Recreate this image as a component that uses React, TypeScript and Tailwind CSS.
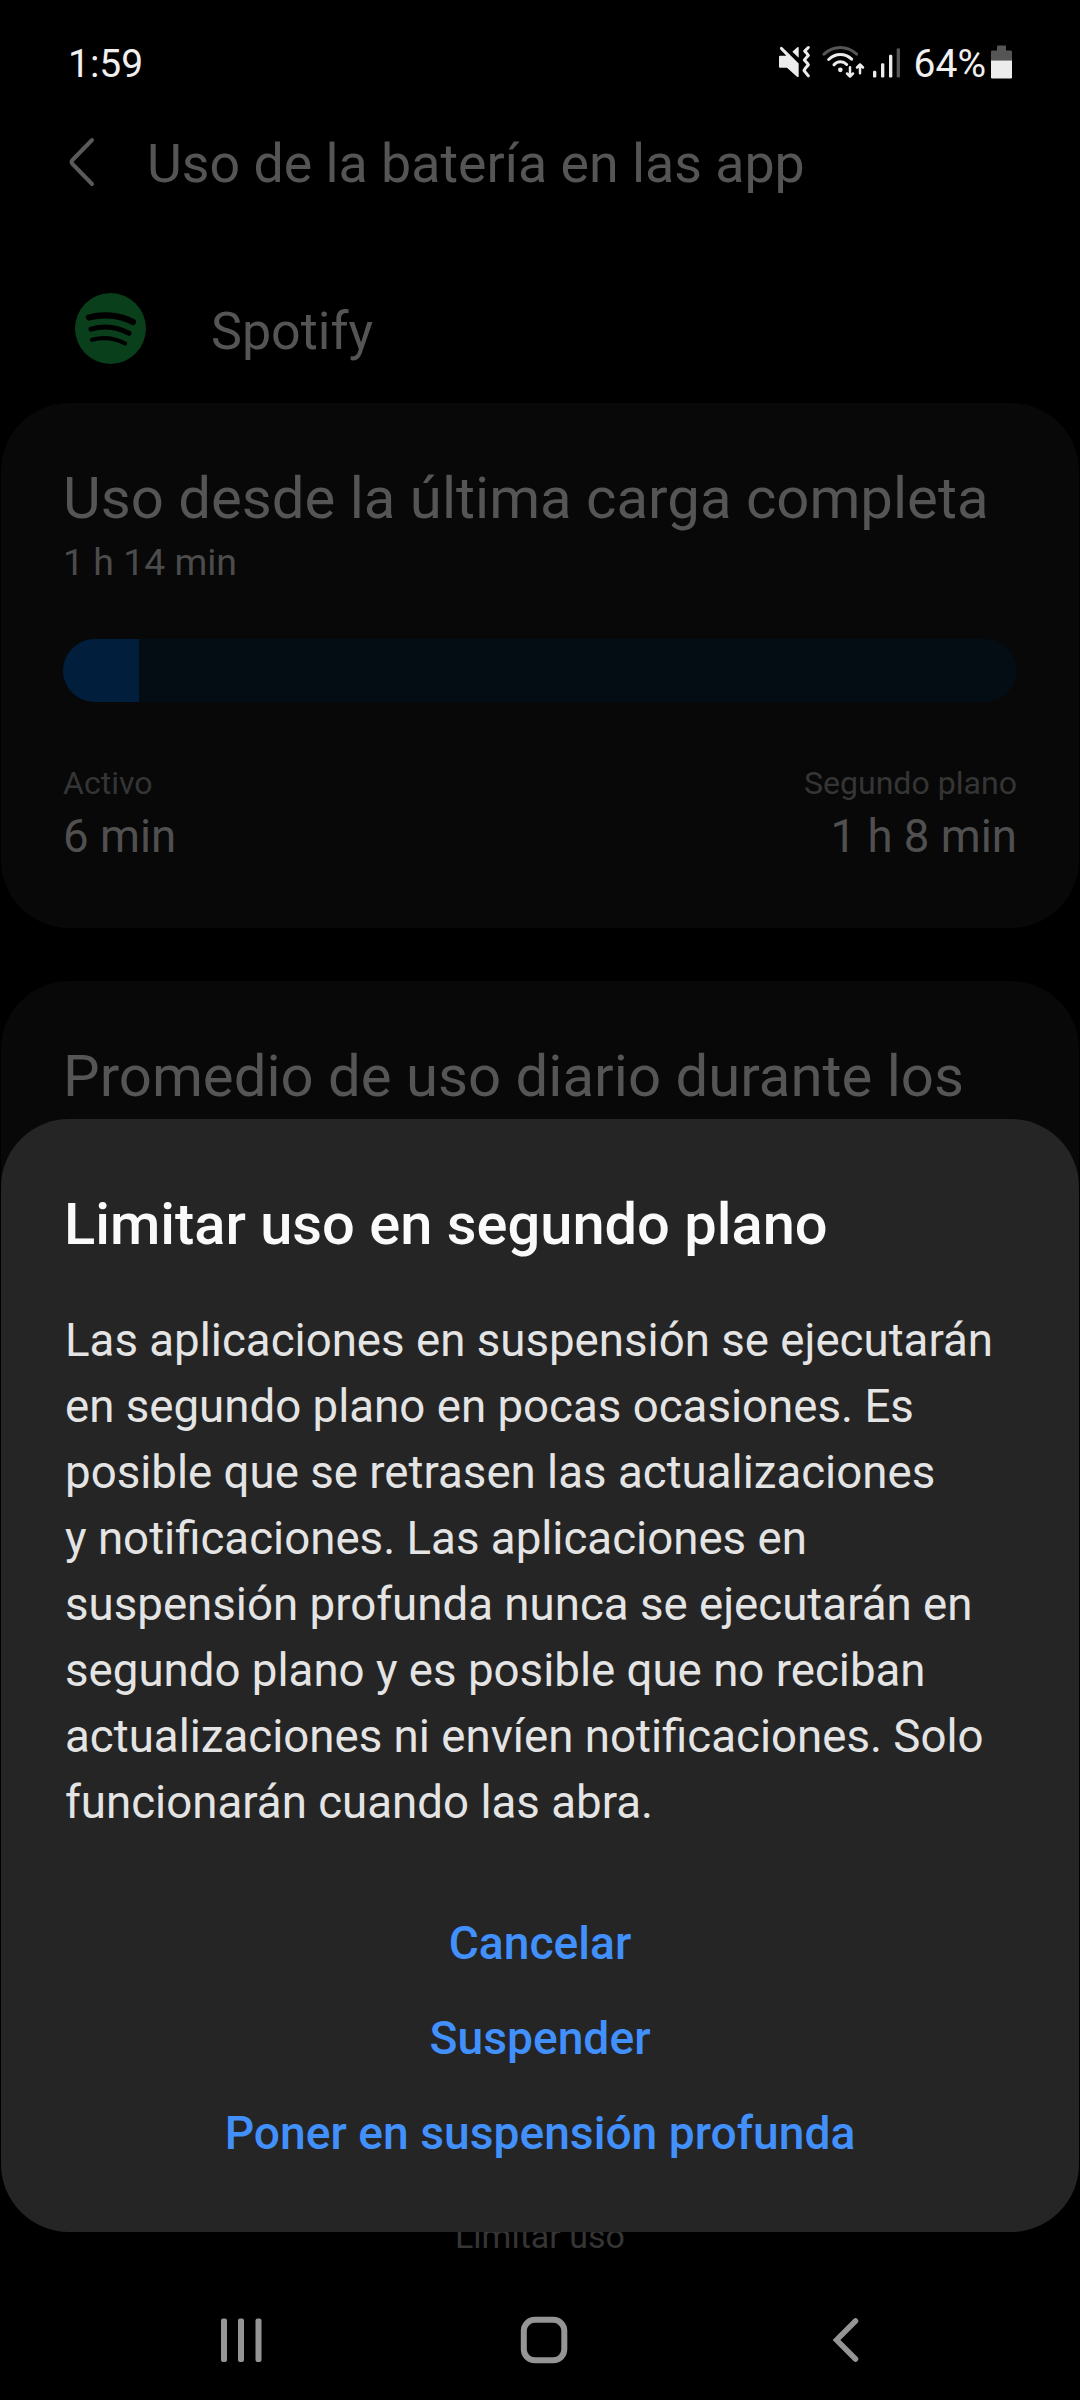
import React from 'react';

const MuteIcon: React.FC = () => (
    <svg width="33" height="38" viewBox="112 73.5 99 114" fill="#ececec">
        <path d="M118 106H137L119 87Q116 82 119 80T125 80L174 129V168Q173 171 169 169L139 142H118Q115 142 115 139V109Q115 106 118 106Z" />
        <path d="M155 94L170 80Q174 79 174 82V112Z" />
        <path
            d="M203 81L192 92Q200 99 203 105Q195 113 191 119Q199 126 203 133Q194 142 190 150L203 166"
            fill="none"
            stroke="#ececec"
            strokeWidth="9"
            strokeLinecap="round"
            strokeLinejoin="round"
        />
    </svg>
);

const WifiIcon: React.FC = () => (
    <svg width="43" height="38" viewBox="243 73.5 129 114" fill="none" stroke="#ececec" strokeWidth="9" strokeLinecap="round">
        <path d="M249 101Q271 81 298 81T347 101" stroke="#555" />
        <path d="M263 117Q279 102 298 102T332 116" />
        <path d="M279 133Q287 124 298 124T317 132" />
        <circle cx="298" cy="148" r="7" fill="#ececec" stroke="none" />
        <path d="M327 140V166M318 159L327 168L336 159M357 158V133M348 141L357 132L366 141" strokeWidth="7.500" strokeLinejoin="round" />
    </svg>
);

const SignalIcon: React.FC = () => (
    <svg width="29" height="38" viewBox="393 73.5 87 114" fill="#ececec">
        <rect x="396" y="151" width="10" height="20" rx="4" />
        <rect x="420" y="128" width="10" height="43" rx="4" />
        <rect x="444" y="103" width="10" height="68" rx="4" />
        <rect x="467" y="83" width="10" height="88" rx="4" fill="#555" />
    </svg>
);

const BatteryIcon: React.FC = () => (
    <svg width="23" height="38" viewBox="750 73.5 69 114">
        <path d="M771 90V78Q771 75 774 75H795Q798 75 798 78V90H812Q816 90 816 94V121H753V94Q753 90 757 90Z" fill="#555" />
        <path d="M753 120H816V170Q816 174 812 174H757Q753 174 753 170Z" fill="#ececec" />
    </svg>
);

const SpotifyLogo: React.FC = () => (
    <svg className="mb-[6px]" width="71" height="71" viewBox="0 0 71 71" fill="none" stroke="#000" strokeLinecap="round">
        <circle cx="35.5" cy="35.5" r="35.5" fill="#093f1b" stroke="none" />
        <path d="M14 24.500C28 20.500 45 22 58 29" strokeWidth="6.200" />
        <path d="M16 36.200C28 32.500 42 33.500 54 40.300" strokeWidth="5" />
        <path d="M17 46.700C28 44 39 44.500 50 50.500" strokeWidth="4.200" />
    </svg>
);

interface StatProps {
    label: string;
    value: string;
    className?: string;
}

const Stat: React.FC<StatProps> = ({ label, value, className }) => (
    <div className={className}>
        <p className="text-[32.1px] leading-[38px] text-[#353535]">{label}</p>
        <p className="mt-[8px] text-[45.6px] leading-[54px] text-[#505050]">{value}</p>
    </div>
);

const StatusBar: React.FC = () => (
    <header className="flex h-[127px] shrink-0 items-center justify-between pl-[68px] pr-[67px] text-[39px] text-[#f0f0f0]">
        <span className="pt-px">1:59</span>
        <div className="flex items-center">
            <MuteIcon />
            <div className="ml-[11px] flex items-center gap-[7px]">
                <WifiIcon />
                <SignalIcon />
            </div>
            <span className="ml-[13px] mr-[4px] pt-px">64%</span>
            <BatteryIcon />
        </div>
    </header>
);

const BatteryUsage: React.FC = () => (
    <main className="flex flex-1 flex-col text-[#555]">
        <div className="flex h-[74px] items-center pl-[66px]">
            <svg className="mb-1" width="30" height="54" viewBox="0 0 30 54" fill="none" stroke="#5a5a5a" strokeWidth="4" strokeLinecap="round" strokeLinejoin="round">
                <path d="M26 5L6.500 25Q4.500 27 6.500 29L26 49" />
            </svg>
            <h1 className="ml-[51px] text-[53.7px] leading-[74px]">Uso de la batería en las app</h1>
        </div>

        <div className="mb-4 mt-[74px] flex h-[112px] items-center pl-[75px]">
            <SpotifyLogo />
            <span className="ml-[65px] pt-[2px] text-[52px]">Spotify</span>
        </div>

        <section className="mx-px h-[525px] rounded-[68px] bg-[#080808] px-[62px] pt-[61px]">
            <h2 className="whitespace-nowrap text-[58.1px] leading-[68px]">Uso desde la última carga completa</h2>
            <p className="mt-[8px] text-[37.4px] leading-[44px] text-[#4c4c4c]">1 h 14 min</p>
            <div className="mt-[55px] h-[63px] overflow-hidden rounded-full bg-[#050d14]">
                <div className="h-full w-[76px] bg-[#011e3c]" />
            </div>
            <div className="mt-[62px] flex justify-between">
                <Stat label="Activo" value="6 min" />
                <Stat label="Segundo plano" value="1 h 8 min" className="text-right" />
            </div>
        </section>

        <section className="mx-px mt-[53px] flex-1 rounded-[68px] bg-[#080808] px-[62px] pt-[61px]">
            <h2 className="whitespace-nowrap text-[58.1px] leading-[68px]">Promedio de uso diario durante los</h2>
        </section>

        <div className="mt-[60px] h-[64px] text-center text-[34px] leading-[40px] text-[#353535]">Limitar uso</div>
    </main>
);

const actions = ['Cancelar', 'Suspender', 'Poner en suspensión profunda'];

const LimitDialog: React.FC = () => (
    <div role="dialog" className="absolute inset-x-px top-[1119px] h-[1113px] rounded-[68px] bg-[#252525] px-[64px] pt-[71px]">
        <h2 className="-ml-px text-[57.8px] font-medium leading-[68px] text-[#fafafa]">Limitar uso en segundo plano</h2>
        <p className="mt-[50px] whitespace-nowrap text-[45.65px] leading-[66px] text-[#e4e4e4]">
            Las aplicaciones en suspensión se ejecutarán<br />
            en segundo plano en pocas ocasiones. Es<br />
            posible que se retrasen las actualizaciones<br />
            y notificaciones. Las aplicaciones en<br />
            suspensión profunda nunca se ejecutarán en<br />
            segundo plano y es posible que no reciban<br />
            actualizaciones ni envíen notificaciones. Solo<br />
            funcionarán cuando las abra.
        </p>
        <div className="mt-[60px] flex flex-col items-center">
            {actions.map((action) => (
                <button key={action} type="button" className="h-[95px] text-[46.2px] font-medium text-[#4190fc]">
                    {action}
                </button>
            ))}
        </div>
    </div>
);

const NavigationBar: React.FC = () => (
    <nav className="flex h-[120px] shrink-0 items-center justify-between pl-[216px] pr-[216px]">
        <svg width="50" height="50" viewBox="0 0 50 50" fill="#959595">
            <rect x="5" y="3.5" width="6" height="43.500" rx="2" />
            <rect x="22" y="3.5" width="6" height="43.500" rx="2" />
            <rect x="39.500" y="3.5" width="6" height="43.500" rx="2" />
        </svg>
        <svg className="ml-[7px]" width="50" height="50" viewBox="0 0 50 50" fill="none" stroke="#959595" strokeWidth="6">
            <rect x="4.800" y="4.800" width="40.500" height="40.500" rx="11" />
        </svg>
        <svg width="50" height="50" viewBox="0 0 50 50" fill="none" stroke="#959595" strokeWidth="5.500" strokeLinecap="round">
            <path d="M41.500 6L22.500 25L41.500 44" />
        </svg>
    </nav>
);

const App: React.FC = () => (
    <div className="relative flex h-[2400px] w-[1080px] flex-col overflow-hidden bg-black font-[Roboto,sans-serif]">
        <StatusBar />
        <BatteryUsage />
        <LimitDialog />
        <NavigationBar />
    </div>
);

export default App;
